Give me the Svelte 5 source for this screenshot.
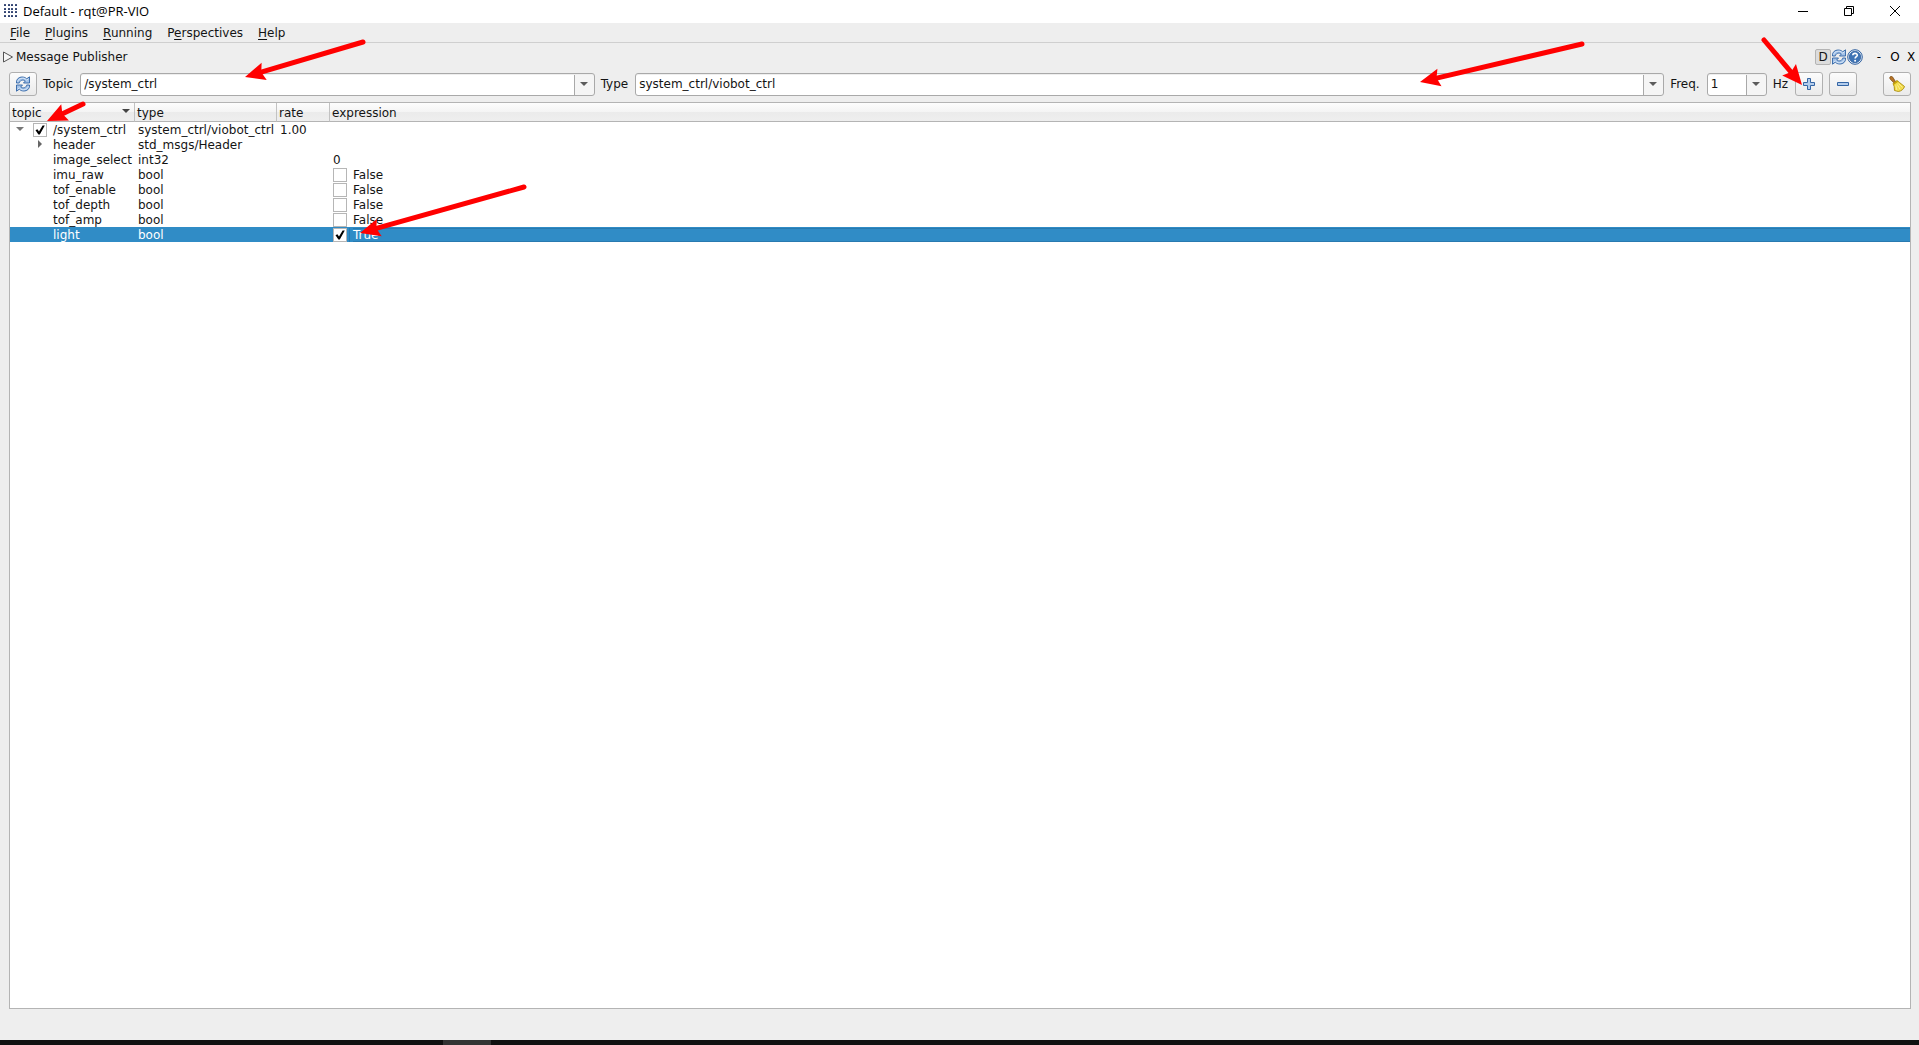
<script>
  const menus = [
    { pre: '', key: 'F', post: 'ile' },
    { pre: '', key: 'P', post: 'lugins' },
    { pre: '', key: 'R', post: 'unning' },
    { pre: 'P', key: 'e', post: 'rspectives' },
    { pre: '', key: 'H', post: 'elp' }
  ]

  let topic = $state('/system_ctrl')
  let type = $state('system_ctrl/viobot_ctrl')
  let freq = $state('1')
  let published = $state(true)
  let expanded = $state(true)
  let selected = $state('light')

  let fields = $state([
    { name: 'header', type: 'std_msgs/Header', branch: true },
    { name: 'image_select', type: 'int32', value: '0' },
    { name: 'imu_raw', type: 'bool', checked: false },
    { name: 'tof_enable', type: 'bool', checked: false },
    { name: 'tof_depth', type: 'bool', checked: false },
    { name: 'tof_amp', type: 'bool', checked: false },
    { name: 'light', type: 'bool', checked: true }
  ])

  // tail and tip of each pointer drawn over the window
  const pointers = [
    { from: [363, 42], to: [245, 77] },
    { from: [83, 104], to: [47, 121] },
    { from: [1582, 44], to: [1420, 82] },
    { from: [1764, 40], to: [1802, 85] },
    { from: [524, 187], to: [360, 233] }
  ]

  const angle = (p) => (Math.atan2(p.from[1] - p.to[1], p.from[0] - p.to[0]) * 180) / Math.PI
  const length = (p) => Math.hypot(p.from[0] - p.to[0], p.from[1] - p.to[1])
</script>

{#snippet refreshIcon()}
  <svg class="icon" viewBox="0 0 16 16" aria-hidden="true">
    {#each [0, 180] as turn}
      <g transform="rotate({turn} 8 8)">
        <path d="M1.500 7V6C1.500 3 4 1 7 1c2.200 0 3.600.7 4.700 1.800L14.500.8v6.200H8.500L10.300 5C8.600 3.500 5.400 3.800 4.500 6.300L4.300 7z" fill="#a3c2e8" stroke="#2f63a5" stroke-width="0.9" stroke-linejoin="round" />
        <path d="M2.600 5.800C3 3.400 5 2.200 7.500 2.200c2 0 3.200.8 4.200 1.900l1.700-1.200" fill="none" stroke="#e4effa" stroke-width="0.8" />
      </g>
    {/each}
  </svg>
{/snippet}

<div class="window">
  <header class="titlebar">
    <svg class="app-icon" viewBox="0 0 13 13" aria-hidden="true">
      {#each [0, 4, 7, 11] as y}
        {#each [0, 4, 7, 11] as x}
          <rect {x} {y} width="2" height="2" rx="0.5" />
        {/each}
      {/each}
    </svg>
    <span class="title">Default - rqt@PR-VIO</span>
    <div class="window-buttons">
      <button aria-label="Minimize">
        <svg viewBox="0 0 12 12"><path d="M1 6.500h10" /></svg>
      </button>
      <button aria-label="Restore">
        <svg viewBox="0 0 12 12"><path d="M1.500 3.500h7v7h-7zM3.500 3.500v-2h7v7h-2" /></svg>
      </button>
      <button aria-label="Close">
        <svg viewBox="0 0 12 12"><path d="M1 1l10 10M11 1L1 11" /></svg>
      </button>
    </div>
  </header>

  <nav class="menubar">
    {#each menus as m}
      <button>{m.pre}<u>{m.key}</u>{m.post}</button>
    {/each}
  </nav>

  <section class="dock">
    <div class="dock-title">
      <svg class="dock-mark" viewBox="0 0 12 12" aria-hidden="true"><path d="M1.500 1L10.500 6L1.500 11z" /></svg>
      <span>Message Publisher</span>
      <div class="dock-buttons">
        <button class="flag">D</button>
        <button aria-label="Reload">{@render refreshIcon()}</button>
        <button aria-label="Help">
          <svg class="icon" viewBox="0 0 16 16">
            <circle cx="8" cy="8" r="7.300" fill="#e8f0f9" stroke="#2f5f9e" stroke-width="1" />
            <circle cx="8" cy="8" r="5.700" fill="#3f74b5" stroke="#2f5f9e" stroke-width="0.8" />
            <path d="M5.800 6.300C5.800 3.700 10.300 3.700 10.300 6.200C10.300 7.700 8.100 7.800 8.100 9.600" fill="none" stroke="#fff" stroke-width="1.600" />
            <circle cx="8.100" cy="11.700" r="1" fill="#fff" />
          </svg>
        </button>
      </div>
      <div class="dock-controls">
        <button>-</button>
        <button>O</button>
        <button>X</button>
      </div>
    </div>

    <div class="toolbar">
      <button class="tool" aria-label="Refresh topics">{@render refreshIcon()}</button>
      <label for="topic">Topic</label>
      <div class="combo topic">
        <select id="topic" bind:value={topic}>
          <option>/system_ctrl</option>
        </select>
      </div>
      <label for="type">Type</label>
      <div class="combo type">
        <select id="type" bind:value={type}>
          <option>system_ctrl/viobot_ctrl</option>
        </select>
      </div>
      <label for="freq">Freq.</label>
      <div class="combo freq">
        <select id="freq" bind:value={freq}>
          <option>1</option>
          <option>10</option>
          <option>100</option>
        </select>
      </div>
      <label for="freq">Hz</label>
      <button class="tool" aria-label="Add publisher">
        <svg class="icon" viewBox="0 0 16 16">
          <path d="M6.500 2.500h3v4h4v3h-4v4h-3v-4h-4v-3h4z" fill="#b4cdec" stroke="#3465a4" stroke-linejoin="round" />
        </svg>
      </button>
      <button class="tool" aria-label="Remove publisher">
        <svg class="icon" viewBox="0 0 16 16">
          <path d="M2.500 6.500h11v3h-11z" fill="#b4cdec" stroke="#3465a4" stroke-linejoin="round" />
        </svg>
      </button>
      <button class="tool clear" aria-label="Clear publishers">
        <svg class="icon" viewBox="0 0 16 16">
          <path d="M1.200.8C2.400-.2 3.500.6 4 1.600L6.500 5.500 4.800 6.800 1.300 3.200C.6 2.400.5 1.500 1.200.8z" fill="#b5742a" stroke="#7a4a12" stroke-width="0.7" />
          <path d="M4 7.500L8 4.500 10.500 6.500 15.500 10.500C14.800 13 12.500 15 9.500 15.500L5.500 14.500 5.200 10.500z" fill="#f2dc4c" stroke="#a98a08" stroke-width="0.9" stroke-linejoin="round" />
          <path d="M4.600 8.300L8.700 5.300" stroke="#c4a000" stroke-width="1.200" />
          <path d="M6.800 9.500L8 14.500M8.300 8.500L11 13.500M9.500 7.500L13.500 11.500" stroke="#fff7a8" stroke-width="0.7" fill="none" />
        </svg>
      </button>
    </div>

    <div class="tree">
      <table>
        <colgroup>
          <col class="c-topic" />
          <col class="c-type" />
          <col class="c-rate" />
          <col />
        </colgroup>
        <thead>
          <tr>
            <th><span class="sort">topic</span></th>
            <th>type</th>
            <th>rate</th>
            <th>expression</th>
          </tr>
        </thead>
        <tbody>
          <tr>
            <td>
              <div class="cell">
                <button class="branch open" aria-label="Toggle /system_ctrl" onclick={() => (expanded = !expanded)}></button>
                <label class="check"><input type="checkbox" bind:checked={published} />/system_ctrl</label>
              </div>
            </td>
            <td>system_ctrl/viobot_ctrl</td>
            <td>1.00</td>
            <td></td>
          </tr>
          {#if expanded}
            {#each fields as field}
              <tr class:selected={field.name === selected} onclick={() => (selected = field.name)}>
                <td>
                  <div class="cell child">
                    {#if field.branch}
                      <button class="branch" aria-label="Expand {field.name}"></button>
                    {:else}
                      <span class="branch-space"></span>
                    {/if}
                    <span class="name">{field.name}</span>
                  </div>
                </td>
                <td>{field.type}</td>
                <td></td>
                <td>
                  {#if field.checked !== undefined}
                    <label class="check">
                      <input type="checkbox" bind:checked={field.checked} />
                      <span class="value">{field.checked ? 'True' : 'False'}</span>
                    </label>
                  {:else}
                    {field.value ?? ''}
                  {/if}
                </td>
              </tr>
            {/each}
          {/if}
        </tbody>
      </table>
    </div>
  </section>

  <footer class="taskbar"><span></span></footer>

  <svg class="pointers" aria-hidden="true">
    {#each pointers as p}
      <g transform="translate({p.to[0]} {p.to[1]}) rotate({angle(p)})">
        <path class="shaft" d="M16 0H{length(p)}" />
        <path class="head" d="M0 0L20 -9L17 0L20 9z" />
      </g>
    {/each}
  </svg>
</div>

<style>
  :global(body) {
    margin: 0;
    background: #eee;
  }

  .window {
    position: relative;
    display: flex;
    flex-direction: column;
    min-height: 100vh;
    background: #eee;
    color: #141414;
    font: 12px/15px "DejaVu Sans", sans-serif;
  }

  button, select {
    font: inherit;
    color: inherit;
  }

  button {
    border: 0;
    padding: 0;
    background: none;
  }

  .icon {
    display: block;
    width: 16px;
    height: 16px;
  }

  .titlebar {
    display: flex;
    align-items: center;
    box-sizing: border-box;
    height: 23px;
    padding: 0 1px 2px 4px;
    background: #fff;
    color: #000;
  }

  .app-icon {
    width: 13px;
    height: 13px;
    fill: #2c3e6e;
  }

  .title {
    margin-left: 6px;
    font: 13px/18px "Open Sans", sans-serif;
  }

  .window-buttons {
    display: flex;
    margin-left: auto;
  }

  .window-buttons button {
    display: grid;
    place-items: center;
    width: 46px;
    height: 20px;
  }

  .window-buttons svg {
    width: 12px;
    height: 12px;
    fill: none;
    stroke: #000;
  }

  .menubar {
    display: flex;
    height: 19px;
    padding-left: 3px;
    border-bottom: 1px solid #cfcfcf;
  }

  .menubar button {
    padding: 2px 8px 0 7px;
  }

  u {
    text-underline-offset: 2px;
  }

  .dock {
    display: flex;
    flex: 1;
    flex-direction: column;
  }

  .dock-title {
    display: flex;
    align-items: center;
    height: 26px;
    padding: 1px 0 0 2px;
  }

  .dock-mark {
    width: 12px;
    height: 12px;
    margin-right: 2px;
    fill: #f6f6f6;
    stroke: #555;
  }

  .dock-buttons {
    display: flex;
    margin-left: auto;
  }

  .flag {
    width: 16px;
    height: 16px;
    border: 1px solid #b4b4b4;
    border-radius: 2px;
    background: #dcdcdc;
    line-height: 14px;
  }

  .dock-controls {
    display: flex;
    margin-left: 8px;
    color: #000;
  }

  .dock-controls button {
    width: 16px;
  }

  .toolbar {
    display: flex;
    align-items: center;
    gap: 6px;
    margin: 2px 8px 6px 9px;
  }

  .toolbar label {
    margin-right: 1px;
    padding-top: 1px;
  }

  .tool {
    display: grid;
    flex: none;
    place-items: center;
    width: 28px;
    height: 24px;
    border: 1px solid #b0b0b0;
    border-radius: 3px;
    background: linear-gradient(#fcfcfc, #eaeaea);
  }

  .clear {
    margin-left: 20px;
  }

  .combo {
    position: relative;
    display: flex;
    min-width: 0;
  }

  .combo.topic {
    flex: 1 1 0;
  }

  .combo.type {
    flex: 2 1 0;
  }

  .combo.freq {
    flex: 0 0 60px;
  }

  .combo select {
    appearance: none;
    width: 100%;
    height: 23px;
    padding: 0 24px 0 3px;
    border: 1px solid #a9a9a9;
    border-radius: 3px;
    background: linear-gradient(90deg, #a9a9a9 1px, #f5f5f5 1px) right / 20px 100% no-repeat #fff;
    box-shadow: inset 0 1px #eee;
  }

  .combo::after {
    content: "";
    position: absolute;
    top: 9px;
    right: 7px;
    border: 4px solid transparent;
    border-top: 4px solid #5c5c5c;
    border-bottom: 0;
    pointer-events: none;
  }

  .tree {
    flex: 1;
    margin: 0 8px 31px 9px;
    border: 1px solid #b4b4b4;
    background: #fff;
  }

  table {
    width: 100%;
    table-layout: fixed;
    border-collapse: separate;
    border-spacing: 0;
  }

  .c-topic {
    width: 125px;
  }

  .c-type {
    width: 142px;
  }

  .c-rate {
    width: 53px;
  }

  th {
    box-sizing: border-box;
    height: 19px;
    padding: 2px 2px 0;
    border-right: 1px solid #c2c2c2;
    border-bottom: 1px solid #b4b4b4;
    background: linear-gradient(#fdfdfd, #f4f4f4 50%, #ebebeb 50%, #eee);
    font-weight: normal;
    text-align: left;
  }

  th:last-child {
    border-right: 0;
  }

  .sort {
    display: flex;
    align-items: center;
    justify-content: space-between;
    padding-right: 2px;
  }

  .sort::after {
    content: "";
    margin-bottom: 4px;
    border: 4px solid transparent;
    border-top: 4px solid #444;
    border-bottom: 0;
  }

  td {
    box-sizing: border-box;
    height: 15px;
    padding: 1px 0 0 3px;
    line-height: 14px;
    white-space: nowrap;
  }

  td:first-child {
    padding-left: 0;
  }

  .cell {
    display: flex;
    align-items: center;
    height: 14px;
  }

  .child {
    padding-left: 20px;
  }

  .branch, .branch-space {
    flex: none;
    width: 20px;
    height: 14px;
    margin-right: 3px;
  }

  .branch::before {
    content: "";
    display: block;
    width: 0;
    margin: -2px auto 0;
    border: 4px solid transparent;
    border-left: 4px solid #666;
    border-right: 0;
  }

  .branch.open::before {
    border: 4px solid transparent;
    border-top: 4px solid #777;
    border-bottom: 0;
  }

  .check {
    display: flex;
    align-items: center;
    height: 14px;
  }

  .check input {
    appearance: none;
    flex: none;
    box-sizing: border-box;
    width: 14px;
    height: 14px;
    margin: 0 6px 0 0;
    border: 1px solid #b6b6b6;
    background: #fff;
  }

  .check input:checked::before {
    content: "";
    display: block;
    width: 10px;
    height: 10px;
    margin: 1px;
    background: #000;
    clip-path: polygon(5% 52%, 24% 42%, 40% 66%, 76% 4%, 98% 4%, 48% 96%, 34% 96%);
  }

  .selected {
    background: #308cc6;
    color: #fff;
  }

  .value {
    flex: 1;
  }

  .selected .value {
    box-shadow: -3px 0 #308cc6, -4px 0 #287ab0, inset 0 1px #287ab0, inset 0 -1px #287ab0;
  }

  .taskbar {
    height: 5px;
    background: #101010;
  }

  .taskbar span {
    display: block;
    width: 48px;
    height: 5px;
    margin-left: 443px;
    background: #333;
  }

  .pointers {
    position: absolute;
    inset: 0;
    width: 100%;
    height: 100%;
    pointer-events: none;
  }

  .shaft {
    stroke: #f00;
    stroke-width: 5;
    stroke-linecap: round;
  }

  .head {
    fill: #f00;
  }
</style>
